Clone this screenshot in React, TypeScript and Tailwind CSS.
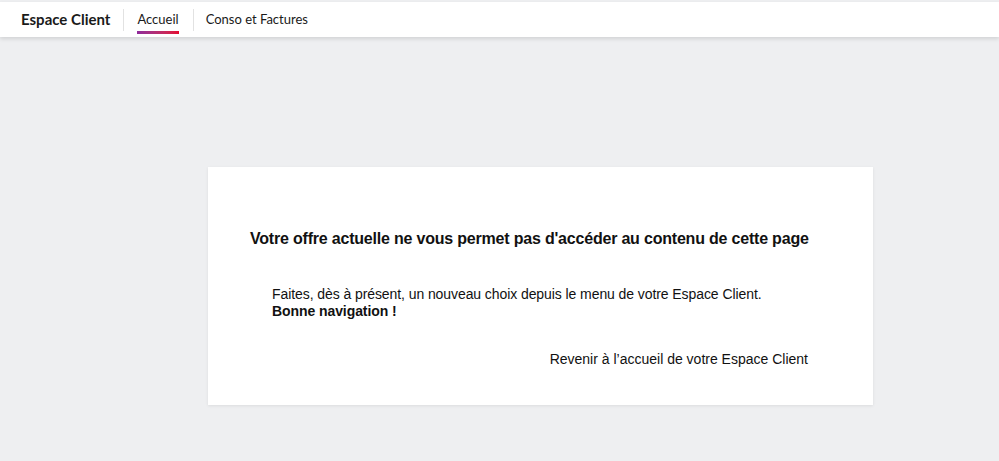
export default function App() {
  return (
    <div className="min-h-[461px] w-full bg-[#eeeff1] pt-[2px]" style={{ fontFamily: '"Liberation Sans", Arial, sans-serif' }}>
      <header className="relative z-10 flex h-[35px] items-center bg-white px-[21px] shadow-[0_2px_4px_rgba(0,0,0,0.12)]" style={{ fontFamily: 'Lato, sans-serif' }}>
        <span className="text-[15px] font-bold text-[#1a1a1a]">Espace Client</span>
        <span className="ml-[13px] mr-[13px] h-[22px] w-px bg-[#e2e2e2]" />
        <nav className="flex h-full items-center">
          <a className="relative flex h-full items-center text-[13px] text-[#1a1a1a]">
            Accueil
            <span className="absolute bottom-[3px] left-0 right-0 h-[3px] bg-gradient-to-r from-[#8f2a9b] to-[#e4032e]" />
          </a>
          <span className="ml-[14px] mr-[12px] h-[22px] w-px bg-[#e2e2e2]" />
          <a className="flex h-full items-center text-[13px] text-[#1a1a1a]">Conso et Factures</a>
        </nav>
      </header>
      <main className="flex pl-[208px] pt-[130px] pb-[55px]">
        <section className="flex h-[238px] w-[665px] flex-col bg-white pt-[60px] shadow-[0_1px_3px_rgba(0,0,0,0.08)]">
          <h1 className="pl-[42px] text-[16px] font-bold tracking-[-0.2px] text-[#111]">
            Votre offre actuelle ne vous permet pas d'accéder au contenu de cette page
          </h1>
          <div className="mt-[35px] pl-[64px] text-[14px] leading-[17px] tracking-[-0.08px] text-[#111]">
            <p>Faites, dès à présent, un nouveau choix depuis le menu de votre Espace Client.</p>
            <p className="font-bold">Bonne navigation !</p>
          </div>
          <div className="mt-[29px] pr-[65px] text-right text-[14px] text-[#111]">
            <a>Revenir à l’accueil de votre Espace Client</a>
          </div>
        </section>
      </main>
    </div>
  );
}
